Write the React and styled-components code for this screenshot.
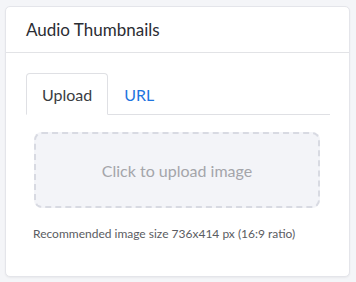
import styled, { createGlobalStyle } from "styled-components";
import { useState } from "react";

const GlobalStyle = createGlobalStyle`
  html, body {
    margin: 0;
    background-color: #f4f5f8;
    font-family: "Lato", "Open Sans", sans-serif;
  }
`;

const Page = styled.div`
  padding: 6px 6px 0 5px;
  width: 356px;
  height: 282px;
  box-sizing: border-box;
`;

const Card = styled.div`
  background-color: #ffffff;
  border: 1px solid #e4e5ea;
  border-radius: 5px;
  box-shadow: 0 1px 2px rgba(0, 0, 0, 0.05);
  height: 271px;
  box-sizing: border-box;
  display: flex;
  flex-direction: column;
`;

const CardHeader = styled.div`
  height: 46px;
  box-sizing: border-box;
  border-bottom: 1px solid #e2e3e6;
  display: flex;
  align-items: center;
  padding: 0 20px;
  font-size: 17px;
  color: #2b2d33;
`;

const CardBody = styled.div`
  padding: 20px 19px 0 20px;
`;

const TabList = styled.div`
  display: flex;
  border-bottom: 1px solid #dfe0e4;
  height: 42px;
  box-sizing: border-box;
`;

const Tab = styled.button`
  border: 1px solid ${(p) => (p.$active ? "#dfe0e4" : "transparent")};
  border-bottom: ${(p) => (p.$active ? "1px solid #ffffff" : "none")};
  border-radius: 4px 4px 0 0;
  background: ${(p) => (p.$active ? "#ffffff" : "transparent")};
  margin-bottom: ${(p) => (p.$active ? "-1px" : "0")};
  padding: 0 15px;
  height: ${(p) => (p.$active ? "42px" : "41px")};
  font-family: inherit;
  font-size: 16px;
  color: ${(p) => (p.$active ? "#3a3c42" : "#1f74e0")};
  cursor: pointer;
`;

const TabPanel = styled.div`
  padding: 17px 10px 0 8px;
`;

const DropZone = styled.div`
  height: 76px;
  box-sizing: border-box;
  border: 2px dashed #d8dae2;
  border-radius: 8px;
  background-color: #f3f4f8;
  display: flex;
  align-items: center;
  justify-content: center;
  font-size: 16px;
  color: #a4a5aa;
  cursor: pointer;
`;

const Hint = styled.p`
  margin: 18px 0 0 -1px;
  font-size: 12px;
  color: #5a5c62;
`;

export default function App() {
  const [tab, setTab] = useState("upload");
  return (
    <>
      <GlobalStyle />
      <Page>
        <Card>
          <CardHeader>Audio Thumbnails</CardHeader>
          <CardBody>
            <TabList>
              <Tab $active={tab === "upload"} onClick={() => setTab("upload")}>
                Upload
              </Tab>
              <Tab $active={tab === "url"} onClick={() => setTab("url")}>
                URL
              </Tab>
            </TabList>
            <TabPanel>
              <DropZone>Click to upload image</DropZone>
              <Hint>Recommended image size 736x414 px (16:9 ratio)</Hint>
            </TabPanel>
          </CardBody>
        </Card>
      </Page>
    </>
  );
}
